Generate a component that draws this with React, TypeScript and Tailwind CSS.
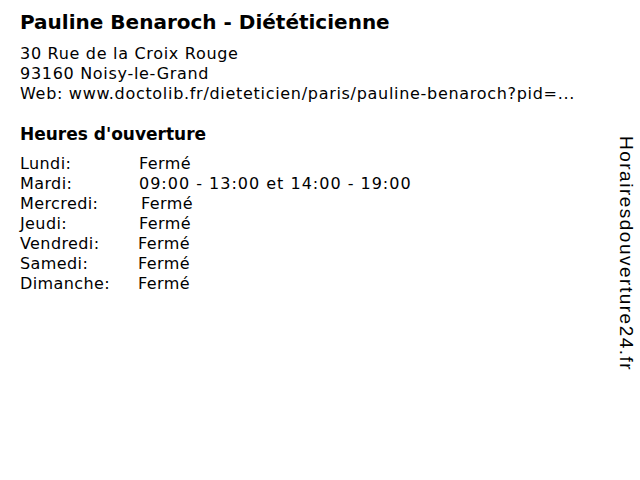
const hours = [
  { day: 'Lundi:', value: 'Fermé', pad: 'pl-[119px]' },
  { day: 'Mardi:', value: '09:00 - 13:00 et 14:00 - 19:00', pad: 'pl-[119px] tracking-[1px]' },
  { day: 'Mercredi:', value: 'Fermé', pad: 'pl-[121px]' },
  { day: 'Jeudi:', value: 'Fermé', pad: 'pl-[119px]' },
  { day: 'Vendredi:', value: 'Fermé', pad: 'pl-[118px]' },
  { day: 'Samedi:', value: 'Fermé', pad: 'pl-[118px]' },
  { day: 'Dimanche:', value: 'Fermé', pad: 'pl-[118px]' },
];

export default function App() {
  return (
    <div className="w-[640px] h-[480px] bg-white text-black flex font-['DejaVu_Sans',sans-serif] overflow-hidden">
      <div className="flex-1 pl-5 pt-[10px]">
        <h1 className="text-[20px] leading-[24px] font-bold">Pauline Benaroch - Diététicienne</h1>
        <div className="mt-[10px] text-[16px] leading-[20px] tracking-[0.7px]">
          <div>30 Rue de la Croix Rouge</div>
          <div>93160 Noisy-le-Grand</div>
          <div>Web: www.doctolib.fr/dieteticien/paris/pauline-benaroch?pid=...</div>
        </div>
        <h2 className="mt-[18px] text-[17px] leading-[24px] font-bold">Heures d'ouverture</h2>
        <div className="mt-[8px] text-[16px] leading-[20px] tracking-[0.4px]">
          {hours.map((h) => (
            <div key={h.day} className="relative">
              <span className="absolute left-0">{h.day}</span>
              <span className={h.pad}>{h.value}</span>
            </div>
          ))}
        </div>
      </div>
      <div className="w-[40px] flex justify-end pr-[2px] pt-[136px]">
        <div className="[writing-mode:vertical-rl] font-['Liberation_Sans',sans-serif] text-[19px] leading-[24px] tracking-[1.5px]">
          Horairesdouverture24.fr
        </div>
      </div>
    </div>
  );
}
